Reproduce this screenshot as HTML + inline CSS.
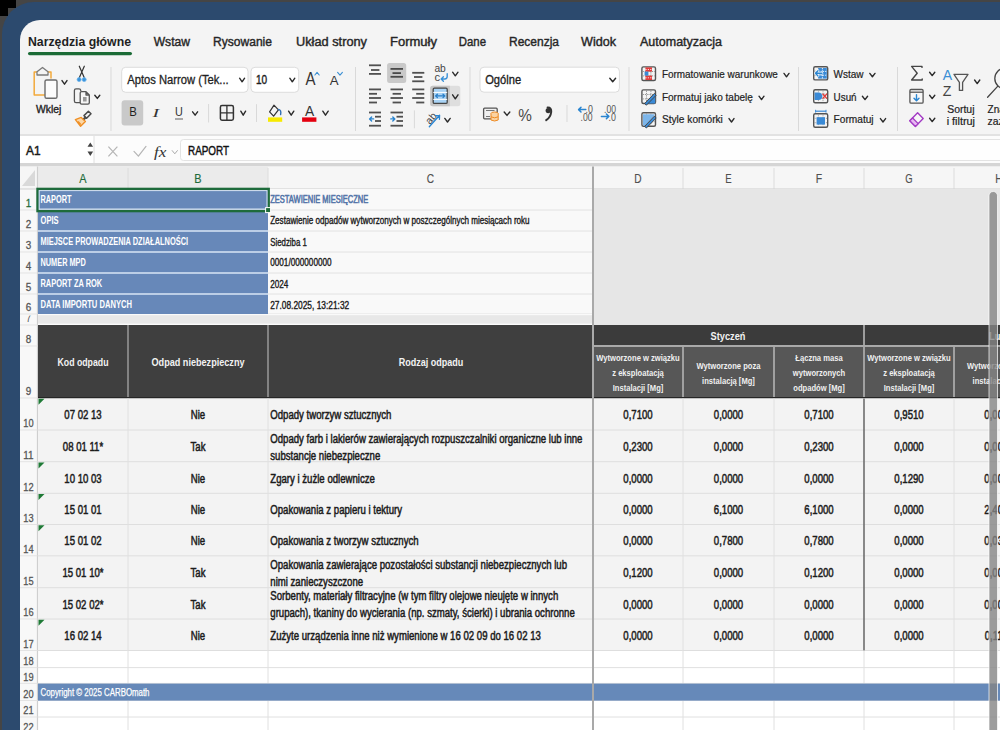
<!DOCTYPE html>
<html><head><meta charset="utf-8"><style>
html,body{margin:0;padding:0;width:1000px;height:730px;overflow:hidden;background:#454545}
svg{display:block;font-family:"Liberation Sans",sans-serif}
.m{stroke:#1c1c1c;stroke-width:0.5px}
.s{stroke-width:0.3px}
</style></head><body>
<svg width="1000" height="730" viewBox="0 0 1000 730">
<rect x="0" y="0" width="1000" height="730" fill="#454545"/>
<rect x="2" y="2" width="1200" height="900" rx="32" fill="#2c4a6e"/>
<path d="M0 0H16V8H8V16H0Z" fill="#000"/>
<rect x="20" y="20" width="1200" height="900" rx="20" fill="#f4f4f4"/>
<text x="28.00" y="46.00" font-size="12.5" font-weight="bold" fill="#1f1f1f" textLength="103.00" lengthAdjust="spacingAndGlyphs">Narzędzia główne</text>
<text x="153.70" y="46.00" font-size="12.5" font-weight="normal" fill="#262626" textLength="36.30" lengthAdjust="spacingAndGlyphs" stroke="#262626" stroke-width="0.4">Wstaw</text>
<text x="213.00" y="46.00" font-size="12.5" font-weight="normal" fill="#262626" textLength="59.00" lengthAdjust="spacingAndGlyphs" stroke="#262626" stroke-width="0.4">Rysowanie</text>
<text x="296.00" y="46.00" font-size="12.5" font-weight="normal" fill="#262626" textLength="71.00" lengthAdjust="spacingAndGlyphs" stroke="#262626" stroke-width="0.4">Układ strony</text>
<text x="390.00" y="46.00" font-size="12.5" font-weight="normal" fill="#262626" textLength="47.00" lengthAdjust="spacingAndGlyphs" stroke="#262626" stroke-width="0.4">Formuły</text>
<text x="458.80" y="46.00" font-size="12.5" font-weight="normal" fill="#262626" textLength="27.20" lengthAdjust="spacingAndGlyphs" stroke="#262626" stroke-width="0.4">Dane</text>
<text x="509.00" y="46.00" font-size="12.5" font-weight="normal" fill="#262626" textLength="50.00" lengthAdjust="spacingAndGlyphs" stroke="#262626" stroke-width="0.4">Recenzja</text>
<text x="581.00" y="46.00" font-size="12.5" font-weight="normal" fill="#262626" textLength="35.00" lengthAdjust="spacingAndGlyphs" stroke="#262626" stroke-width="0.4">Widok</text>
<text x="640.00" y="46.00" font-size="12.5" font-weight="normal" fill="#262626" textLength="82.00" lengthAdjust="spacingAndGlyphs" stroke="#262626" stroke-width="0.4">Automatyzacja</text>
<rect x="28" y="52" width="104" height="3.2" rx="1.6" fill="#1b6b36"/>
<line x1="111" y1="67" x2="111" y2="131" stroke="#d9d9d9" stroke-width="1"/>
<line x1="355.5" y1="67" x2="355.5" y2="131" stroke="#d9d9d9" stroke-width="1"/>
<line x1="470" y1="67" x2="470" y2="131" stroke="#d9d9d9" stroke-width="1"/>
<line x1="629" y1="67" x2="629" y2="131" stroke="#d9d9d9" stroke-width="1"/>
<line x1="798.5" y1="67" x2="798.5" y2="131" stroke="#d9d9d9" stroke-width="1"/>
<line x1="897.5" y1="67" x2="897.5" y2="131" stroke="#d9d9d9" stroke-width="1"/>
<rect x="20" y="134" width="1000" height="2" fill="#e2e2e2"/>
<rect x="20" y="136" width="1000" height="27" fill="#fcfcfc"/>
<rect x="20" y="136" width="74" height="27" fill="#ffffff"/>
<line x1="94" y1="136" x2="94" y2="163" stroke="#dedede" stroke-width="1"/>
<rect x="180.5" y="139.5" width="900" height="21" rx="3" fill="#fefefe" stroke="#e3e3e3" stroke-width="1"/>
<rect x="20" y="163" width="1000" height="3.5" fill="#d5d5d5"/>
<text x="26.00" y="155.00" font-size="12" font-weight="normal" fill="#1a1a1a" textLength="14.50" lengthAdjust="spacingAndGlyphs" stroke="#1a1a1a" stroke-width="0.45">A1</text>
<text x="188.00" y="155.20" font-size="13" font-weight="normal" fill="#111" textLength="41.00" lengthAdjust="spacingAndGlyphs" stroke="#111" stroke-width="0.45">RAPORT</text>
<rect x="20" y="166.5" width="1000" height="22.5" fill="#f6f6f6"/>
<rect x="38" y="166.5" width="230" height="22.5" fill="#ebebeb"/>
<rect x="20" y="189" width="17.5" height="560" fill="#f8f8f8"/>
<rect x="38" y="189" width="1000" height="560" fill="#ffffff"/>
<path d="M37.5 72 H34.2 V95 H44.5 M47.5 72 H51 V78" fill="none" stroke-linecap="round" stroke-linejoin="round" stroke="#f2a93b" stroke-width="1.5"/>
<path d="M37 75 V71.8 L42.5 67.5 L48 71.8 V75 Z" fill="#f4f4f4" stroke="#7a7a7a" stroke-width="1.3" stroke-linejoin="round"/>
<rect x="45" y="80" width="12" height="18.3" rx="1.6" fill="#fbfbfb" stroke="#6b6b6b" stroke-width="1.4"/>
<polyline points="62,80.6 64.5,84.2 67,80.6" fill="none" stroke="#2a2a2a" stroke-width="1.4" stroke-linecap="round" stroke-linejoin="round"/>
<text x="36.00" y="113.40" font-size="11" font-weight="normal" fill="#222" textLength="25.30" lengthAdjust="spacingAndGlyphs" stroke="#222" stroke-width="0.35">Wklej</text>
<path d="M79.3 66.2 L84.2 77.6 M84.3 66.2 L79.4 77.6" fill="none" stroke-linecap="round" stroke-linejoin="round" stroke="#333" stroke-width="1.2"/>
<circle cx="79.1" cy="79.6" r="2" fill="#3b94dc" stroke="#6bb3ea" stroke-width="0.8"/>
<circle cx="84.2" cy="79.6" r="2" fill="#3b94dc" stroke="#6bb3ea" stroke-width="0.8"/>
<path d="M80 102.6 H76 Q74.4 102.6 74.4 101 V90.4 Q74.4 88.8 76 88.8 H79 Q80.6 88.8 80.8 90.6" fill="none" stroke-linecap="round" stroke-linejoin="round" stroke="#555" stroke-width="1.3"/>
<path d="M81.6 91.6 H86 L89.3 95 V102.8 Q89.3 104.2 87.9 104.2 H81.6 Q80.2 104.2 80.2 102.8 V93 Q80.2 91.6 81.6 91.6 Z M86 91.6 V95 H89.3" fill="#f6f6f6" stroke="#555" stroke-width="1.3" stroke-linejoin="round"/>
<rect x="83" y="97" width="3.6" height="4.5" fill="#999"/>
<polyline points="94.8,95.2 97.3,98.4 99.8,95.2" fill="none" stroke="#2a2a2a" stroke-width="1.4" stroke-linecap="round" stroke-linejoin="round"/>
<path d="M88.4 111.2 L91 113.8 L86.6 118.2 L84 115.6 Z" fill="#f4f4f4" stroke="#4a4a4a" stroke-width="1.5" stroke-linejoin="round"/><path d="M85.6 117.4 L82.6 120.4" stroke="#4a4a4a" stroke-width="2.2"/>
<path d="M81.2 117.4 L85.4 121.6 L80.6 126.2 L75.4 119.6 Z" fill="#fbd7a8" stroke="#ef8f25" stroke-width="1.4" stroke-linejoin="round"/>
<path d="M78 121.5 L80.8 124.5" stroke="#ef8f25" stroke-width="1.4"/>
<rect x="121.7" y="67.3" width="126.3" height="25" rx="4" fill="#ffffff" stroke="#dcdcdc" stroke-width="1"/>
<text x="127.20" y="83.50" font-size="12" font-weight="normal" fill="#1f1f1f" textLength="101.50" lengthAdjust="spacingAndGlyphs" stroke="#1f1f1f" stroke-width="0.3">Aptos Narrow (Tek...</text>
<polyline points="239.6,78.2 242.1,81.8 244.6,78.2" fill="none" stroke="#2a2a2a" stroke-width="1.4" stroke-linecap="round" stroke-linejoin="round"/>
<rect x="251" y="67.3" width="47.7" height="25" rx="4" fill="#ffffff" stroke="#dcdcdc" stroke-width="1"/>
<text x="256.00" y="83.60" font-size="12" font-weight="normal" fill="#1f1f1f" textLength="11.20" lengthAdjust="spacingAndGlyphs" stroke="#1f1f1f" stroke-width="0.4">10</text>
<polyline points="289.8,78.2 292.3,81.8 294.8,78.2" fill="none" stroke="#2a2a2a" stroke-width="1.4" stroke-linecap="round" stroke-linejoin="round"/>
<text x="305.40" y="84.80" font-size="17.5" font-weight="normal" fill="#333" textLength="10.00" lengthAdjust="spacingAndGlyphs">A</text>
<polyline points="314.9,75 317.04999999999995,72.4 319.2,75" fill="none" stroke="#3b8fd3" stroke-width="1.1" stroke-linecap="round" stroke-linejoin="round"/>
<text x="329.80" y="84.80" font-size="13" font-weight="normal" fill="#333" textLength="8.80" lengthAdjust="spacingAndGlyphs">A</text>
<polyline points="337.6,72.4 340.0,75.2 342.4,72.4" fill="none" stroke="#3b8fd3" stroke-width="1.1" stroke-linecap="round" stroke-linejoin="round"/>
<rect x="121.6" y="100.2" width="21.6" height="25.2" rx="3" fill="#c9c9c9"/>
<text x="129.20" y="116.40" font-size="13.5" font-weight="normal" fill="#1f1f1f" textLength="7.60" lengthAdjust="spacingAndGlyphs">B</text>
<text x="152.4" y="116.8" font-size="13.5" font-family="Liberation Serif" font-style="italic" fill="#333" textLength="6.6" lengthAdjust="spacingAndGlyphs">I</text>
<text x="175.00" y="116.20" font-size="13" font-weight="normal" fill="#333" textLength="7.80" lengthAdjust="spacingAndGlyphs">U</text>
<rect x="175" y="118.4" width="8" height="1.2" fill="#777"/>
<polyline points="192.6,111.8 195.1,115.2 197.6,111.8" fill="none" stroke="#2a2a2a" stroke-width="1.4" stroke-linecap="round" stroke-linejoin="round"/>
<line x1="208.6" y1="104" x2="208.6" y2="122.5" stroke="#d9d9d9" stroke-width="1"/>
<rect x="220.4" y="105.6" width="13" height="14.6" rx="1.6" fill="none" stroke="#333" stroke-width="1.5"/>
<path d="M226.9 105.6 V120.2 M220.4 112.9 H233.4" stroke="#333" stroke-width="1.3"/>
<polyline points="240.8,111.2 243.2,115.2 245.6,111.2" fill="none" stroke="#2a2a2a" stroke-width="1.4" stroke-linecap="round" stroke-linejoin="round"/>
<line x1="256.5" y1="104.2" x2="256.5" y2="122" stroke="#d9d9d9" stroke-width="1"/>
<path d="M274 105.2 L278.4 109.8 L273.6 116.2 L269.6 111.8 Z" fill="none" stroke="#333" stroke-width="1.2" stroke-linejoin="round"/>
<path d="M278.5 109.5 Q281.6 110 280.6 114.6" fill="none" stroke="#2f6fb5" stroke-width="1.4" stroke-linecap="round"/>
<rect x="268" y="117.4" width="14.2" height="4.4" fill="#f7ea00"/>
<polyline points="288.6,111.2 291.20000000000005,115.2 293.8,111.2" fill="none" stroke="#2a2a2a" stroke-width="1.4" stroke-linecap="round" stroke-linejoin="round"/>
<text x="305.00" y="115.60" font-size="14" font-weight="normal" fill="#333" textLength="9.20" lengthAdjust="spacingAndGlyphs">A</text>
<rect x="302.1" y="117.4" width="14.3" height="4.4" fill="#e4000f"/>
<polyline points="322.8,111.2 325.5,115.2 328.2,111.2" fill="none" stroke="#2a2a2a" stroke-width="1.4" stroke-linecap="round" stroke-linejoin="round"/>
<line x1="369" y1="65.3" x2="381" y2="65.3" stroke="#505050" stroke-width="1.8"/>
<line x1="371" y1="70" x2="379.4" y2="70" stroke="#505050" stroke-width="1.8"/>
<line x1="369" y1="73.9" x2="381" y2="73.9" stroke="#505050" stroke-width="1.8"/>
<rect x="387.1" y="62.9" width="19.1" height="20.2" rx="2.5" fill="#c9c9c9"/>
<line x1="390.5" y1="68.9" x2="403" y2="68.9" stroke="#4a4a4a" stroke-width="1.8"/>
<line x1="392.5" y1="73.1" x2="401" y2="73.1" stroke="#4a4a4a" stroke-width="1.8"/>
<line x1="390.5" y1="76.8" x2="403" y2="76.8" stroke="#4a4a4a" stroke-width="1.8"/>
<line x1="412.2" y1="72.8" x2="424.3" y2="72.8" stroke="#505050" stroke-width="1.8"/>
<line x1="414" y1="77" x2="422.4" y2="77" stroke="#505050" stroke-width="1.8"/>
<line x1="412.2" y1="81.3" x2="424.3" y2="81.3" stroke="#505050" stroke-width="1.8"/>
<text x="434.40" y="72.40" font-size="10" font-weight="normal" fill="#444" textLength="11.40" lengthAdjust="spacingAndGlyphs">ab</text>
<text x="434.40" y="80.80" font-size="10" font-weight="normal" fill="#444" textLength="5.60" lengthAdjust="spacingAndGlyphs">c</text>
<path d="M447.2 73.8 V76.6 Q447.2 79 444.8 79 H441.4 M443.4 76.8 L441.2 79 L443.4 81.2" fill="none" stroke-linecap="round" stroke-linejoin="round" stroke="#3a92d8" stroke-width="1.4"/>
<polyline points="452.6,72.2 455.3,75.8 458,72.2" fill="none" stroke="#2a2a2a" stroke-width="1.4" stroke-linecap="round" stroke-linejoin="round"/>
<line x1="369" y1="89.4" x2="381" y2="89.4" stroke="#505050" stroke-width="1.8"/>
<line x1="369" y1="93.8" x2="377" y2="93.8" stroke="#505050" stroke-width="1.8"/>
<line x1="369" y1="98" x2="381" y2="98" stroke="#505050" stroke-width="1.8"/>
<line x1="369" y1="102.5" x2="377" y2="102.5" stroke="#505050" stroke-width="1.8"/>
<line x1="390.5" y1="89.4" x2="403" y2="89.4" stroke="#505050" stroke-width="1.8"/>
<line x1="392.6" y1="93.8" x2="401" y2="93.8" stroke="#505050" stroke-width="1.8"/>
<line x1="390.5" y1="98" x2="403" y2="98" stroke="#505050" stroke-width="1.8"/>
<line x1="392.6" y1="102.5" x2="401" y2="102.5" stroke="#505050" stroke-width="1.8"/>
<line x1="412.2" y1="89.4" x2="424.3" y2="89.4" stroke="#505050" stroke-width="1.8"/>
<line x1="416.2" y1="93.8" x2="424.3" y2="93.8" stroke="#505050" stroke-width="1.8"/>
<line x1="412.2" y1="98" x2="424.3" y2="98" stroke="#505050" stroke-width="1.8"/>
<line x1="416.2" y1="102.5" x2="424.3" y2="102.5" stroke="#505050" stroke-width="1.8"/>
<rect x="430.2" y="85.7" width="30.1" height="20.5" rx="2.5" fill="#dedede"/>
<path d="M432.7 85.7 H449.8 V106.2 H432.7 Q430.2 106.2 430.2 103.7 V88.2 Q430.2 85.7 432.7 85.7 Z" fill="#c6c6c6"/>
<rect x="433.2" y="88.2" width="14" height="15.2" rx="1.2" fill="#a9d3f5" stroke="#444" stroke-width="1.3"/>
<path d="M433.2 92.4 H447.2 M433.2 99.4 H447.2" stroke="#fff" stroke-width="1"/>
<path d="M435.6 95.9 H444.8 M437.4 94.2 L435.6 95.9 L437.4 97.6 M443 94.2 L444.8 95.9 L443 97.6" fill="none" stroke-linecap="round" stroke-linejoin="round" stroke="#2a7fc8" stroke-width="1.3"/>
<polyline points="452.6,94.8 455.3,98.8 458,94.8" fill="none" stroke="#2a2a2a" stroke-width="1.4" stroke-linecap="round" stroke-linejoin="round"/>
<line x1="369" y1="112.5" x2="381" y2="112.5" stroke="#505050" stroke-width="1.8"/>
<line x1="375" y1="116.7" x2="381" y2="116.7" stroke="#505050" stroke-width="1.8"/>
<line x1="375" y1="121" x2="381" y2="121" stroke="#505050" stroke-width="1.8"/>
<line x1="369" y1="125.7" x2="381" y2="125.7" stroke="#505050" stroke-width="1.8"/>
<line x1="390.5" y1="112.5" x2="403" y2="112.5" stroke="#505050" stroke-width="1.8"/>
<line x1="396.5" y1="116.7" x2="403" y2="116.7" stroke="#505050" stroke-width="1.8"/>
<line x1="396.5" y1="121" x2="403" y2="121" stroke="#505050" stroke-width="1.8"/>
<line x1="390.5" y1="125.7" x2="403" y2="125.7" stroke="#505050" stroke-width="1.8"/>
<path d="M373.6 118.9 H369.6 M371.6 116.9 L369.6 118.9 L371.6 120.9" fill="none" stroke-linecap="round" stroke-linejoin="round" stroke="#2a85d0" stroke-width="1.4"/>
<path d="M390.8 118.9 H394.8 M392.8 116.9 L394.8 118.9 L392.8 120.9" fill="none" stroke-linecap="round" stroke-linejoin="round" stroke="#2a85d0" stroke-width="1.4"/>
<line x1="414.4" y1="110.4" x2="414.4" y2="128.3" stroke="#d9d9d9" stroke-width="1"/>
<text x="0" y="0" font-size="10.5" fill="#444" transform="translate(430,125) rotate(-50)" textLength="11.5" lengthAdjust="spacingAndGlyphs">ab</text>
<path d="M429.3 126.7 L439.6 115.3 M435.4 115.6 L439.6 115.3 L439.4 119.4" fill="none" stroke-linecap="round" stroke-linejoin="round" stroke="#2a85d0" stroke-width="1.3"/>
<polyline points="444.8,118.4 447.5,122 450.2,118.4" fill="none" stroke="#2a2a2a" stroke-width="1.4" stroke-linecap="round" stroke-linejoin="round"/>
<rect x="480" y="67.2" width="139.4" height="25" rx="4" fill="#ffffff" stroke="#dcdcdc" stroke-width="1"/>
<text x="485.20" y="84.00" font-size="12.5" font-weight="normal" fill="#1f1f1f" textLength="36.00" lengthAdjust="spacingAndGlyphs" stroke="#1f1f1f" stroke-width="0.35">Ogólne</text>
<polyline points="609.8,78.2 612.7,81.8 615.6,78.2" fill="none" stroke="#2a2a2a" stroke-width="1.4" stroke-linecap="round" stroke-linejoin="round"/>
<rect x="483.6" y="108.2" width="13.6" height="10.6" rx="1" fill="#f0f0f0" stroke="#555" stroke-width="1.3"/>
<path d="M486 110.5 H494.5 M486 116.5 H490" stroke="#777" stroke-width="1"/>
<ellipse cx="494.6" cy="113.6" rx="3.6" ry="1.6" fill="#fbd3a2" stroke="#ee8a22" stroke-width="1"/>
<path d="M491 113.6 V120 Q494.6 122 498.2 120 V113.6 M491 116.8 Q494.6 118.8 498.2 116.8" fill="#fbd3a2" stroke="#ee8a22" stroke-width="1"/>
<polyline points="504.2,112 507.0,115.4 509.8,112" fill="none" stroke="#2a2a2a" stroke-width="1.4" stroke-linecap="round" stroke-linejoin="round"/>
<text x="518.20" y="120.60" font-size="17" font-weight="normal" fill="#4a4a4a" textLength="13.60" lengthAdjust="spacingAndGlyphs">%</text>
<path d="M547.6 107.6 Q551.6 107.4 551.2 112 Q550.6 117.4 546.2 120.2" fill="none" stroke="#333" stroke-width="2" stroke-linecap="round"/><circle cx="548.2" cy="110.6" r="2.6" fill="#333"/>
<line x1="567" y1="105" x2="567" y2="122" stroke="#d9d9d9" stroke-width="1"/>
<text x="585.60" y="112.60" font-size="10.5" font-weight="normal" fill="#555" textLength="7.40" lengthAdjust="spacingAndGlyphs">.0</text>
<text x="580.60" y="120.80" font-size="10.5" font-weight="normal" fill="#555" textLength="12.00" lengthAdjust="spacingAndGlyphs">.00</text>
<path d="M585.8 109.6 H578.6 M581 107.2 L578.6 109.6 L581 112" fill="none" stroke-linecap="round" stroke-linejoin="round" stroke="#2a85d0" stroke-width="1.5"/>
<text x="604.00" y="112.60" font-size="10.5" font-weight="normal" fill="#555" textLength="12.00" lengthAdjust="spacingAndGlyphs">.00</text>
<text x="608.60" y="120.80" font-size="10.5" font-weight="normal" fill="#555" textLength="7.40" lengthAdjust="spacingAndGlyphs">.0</text>
<path d="M601.4 116.4 H608.8 M606.4 114 L608.8 116.4 L606.4 118.8" fill="none" stroke-linecap="round" stroke-linejoin="round" stroke="#2a85d0" stroke-width="1.5"/>
<rect x="641.9000000000001" y="66.9" width="13.6" height="13.6" rx="1.5" fill="#f4f4f4" stroke="#555" stroke-width="1.4"/>
<path d="M646.5 67.60000000000001 V79.8 M650.9 67.60000000000001 V79.8 M642.6 71.5 H654.8000000000001 M642.6 75.9 H654.8000000000001" stroke="#8a8a8a" stroke-width="0.9" stroke-dasharray="1.3 1"/>
<rect x="645.4" y="67.4" width="6.6" height="4.2" fill="#e23b3b"/>
<rect x="645.4" y="75.6" width="6.6" height="4.4" fill="#e23b3b"/>
<rect x="644.6" y="71.6" width="3.8" height="4" fill="#3a8ad6"/>
<path d="M645.4 69.5 H652 M645.4 77.8 H652" stroke="#fff" stroke-width="0.8" stroke-dasharray="1.2 1.2"/>
<text x="661.90" y="77.90" font-size="11" font-weight="normal" fill="#222" textLength="116.00" lengthAdjust="spacingAndGlyphs" stroke="#222" stroke-width="0.2">Formatowanie warunkowe</text>
<polyline points="784,73.4 786.5,76.8 789,73.4" fill="none" stroke="#2a2a2a" stroke-width="1.4" stroke-linecap="round" stroke-linejoin="round"/>
<rect x="641.9000000000001" y="89.9" width="13.6" height="13.6" rx="1.5" fill="#f4f4f4" stroke="#555" stroke-width="1.4"/>
<path d="M646.5 90.60000000000001 V102.8 M650.9 90.60000000000001 V102.8 M642.6 94.5 H654.8000000000001 M642.6 98.9 H654.8000000000001" stroke="#8a8a8a" stroke-width="0.9" stroke-dasharray="1.3 1"/>
<path d="M647.6 103.6 L655.2 96 V103.6 Z" fill="#3a8ad6"/>
<path d="M644.6 103.6 L654.4 93.4 L656.2 95.2 L646.4 105.2 Z" fill="#3a8ad6" stroke="#3d3d3d" stroke-width="0.9" stroke-linejoin="round"/>
<text x="661.90" y="100.80" font-size="11" font-weight="normal" fill="#222" textLength="91.00" lengthAdjust="spacingAndGlyphs" stroke="#222" stroke-width="0.2">Formatuj jako tabelę</text>
<polyline points="759,96.2 761.5,99.6 764,96.2" fill="none" stroke="#2a2a2a" stroke-width="1.4" stroke-linecap="round" stroke-linejoin="round"/>
<rect x="641.9000000000001" y="112.7" width="13.6" height="13.6" rx="1.5" fill="#f4f4f4" stroke="#555" stroke-width="1.4"/>
<path d="M646.5 113.4 V125.6 M650.9 113.4 V125.6 M642.6 117.3 H654.8000000000001 M642.6 121.7 H654.8000000000001" stroke="#8a8a8a" stroke-width="0.9" stroke-dasharray="1.3 1"/>
<path d="M643 114.2 H654.4 V116 L645.6 125.4 H643 Z" fill="#7db6ea"/>
<path d="M644.6 126.4 L654.4 116.2 L656.2 118 L646.4 128 Z" fill="#3a8ad6" stroke="#3d3d3d" stroke-width="0.9" stroke-linejoin="round"/>
<text x="661.90" y="123.20" font-size="11" font-weight="normal" fill="#222" textLength="61.00" lengthAdjust="spacingAndGlyphs" stroke="#222" stroke-width="0.2">Style komórki</text>
<polyline points="729,118.6 731.5,122 734,118.6" fill="none" stroke="#2a2a2a" stroke-width="1.4" stroke-linecap="round" stroke-linejoin="round"/>
<rect x="813.7" y="66.7" width="14.0" height="13.2" rx="1.5" fill="#f4f4f4" stroke="#555" stroke-width="1.4"/>
<path d="M818.4 67.4 V79.19999999999999 M823.0 67.4 V79.19999999999999 M814.4 71.2 H827.0 M814.4 75.4 H827.0" stroke="#9a9a9a" stroke-width="0.9" stroke-dasharray="1.3 1"/>
<rect x="818.2" y="68" width="8.6" height="10.6" fill="#3a8ad6"/>
<path d="M818.2 71.4 H826.8 M818.2 75.2 H826.8 M822.4 68 V78.6" stroke="#fff" stroke-width="0.9" stroke-dasharray="1.3 1"/>
<path d="M822 73.3 H815.4 M818 70.7 L815.4 73.3 L818 75.9" fill="none" stroke-linecap="round" stroke-linejoin="round" stroke="#ffffff" stroke-width="2.6"/>
<path d="M822 73.3 H815.4 M818 70.7 L815.4 73.3 L818 75.9" fill="none" stroke-linecap="round" stroke-linejoin="round" stroke="#2a85d0" stroke-width="1.4"/>
<text x="833.60" y="77.90" font-size="11" font-weight="normal" fill="#222" textLength="30.00" lengthAdjust="spacingAndGlyphs" stroke="#222" stroke-width="0.2">Wstaw</text>
<polyline points="869.8,73.4 872.4,76.8 875,73.4" fill="none" stroke="#2a2a2a" stroke-width="1.4" stroke-linecap="round" stroke-linejoin="round"/>
<rect x="813.7" y="89.7" width="14.0" height="13.0" rx="1.5" fill="#f4f4f4" stroke="#555" stroke-width="1.4"/>
<path d="M818.4 90.4 V102.0 M823.0 90.4 V102.0 M814.4 94.1 H827.0 M814.4 98.3 H827.0" stroke="#9a9a9a" stroke-width="0.9" stroke-dasharray="1.3 1"/>
<path d="M814.6 92.4 H818.4 Q822.2 92.4 822.2 96.2 Q822.2 100 818.4 100 H814.6 Z" fill="#3a8ad6"/>
<path d="M822.6 93.8 L827 98.6 M827 93.8 L822.6 98.6" stroke="#e23b3b" stroke-width="1.3"/>
<text x="833.60" y="100.80" font-size="11" font-weight="normal" fill="#222" textLength="23.00" lengthAdjust="spacingAndGlyphs" stroke="#222" stroke-width="0.2">Usuń</text>
<polyline points="862.4,96.2 865.0,99.6 867.6,96.2" fill="none" stroke="#2a2a2a" stroke-width="1.4" stroke-linecap="round" stroke-linejoin="round"/>
<rect x="813.7" y="113.7" width="14.0" height="13.6" rx="1.5" fill="#f4f4f4" stroke="#555" stroke-width="1.4"/>
<path d="M818.4 114.4 V126.6 M823.0 114.4 V126.6 M814.4 118.3 H827.0 M814.4 122.7 H827.0" stroke="#9a9a9a" stroke-width="0.9" stroke-dasharray="1.3 1"/>
<rect x="816.6" y="117.2" width="8.4" height="7.4" fill="#3a8ad6"/>
<path d="M815.6 111.2 H826" stroke="#3a8ad6" stroke-width="1.2"/><path d="M815.6 109.8 V112.6 M826 109.8 V112.6" stroke="#3a8ad6" stroke-width="1"/>
<text x="833.60" y="123.20" font-size="11" font-weight="normal" fill="#222" textLength="40.00" lengthAdjust="spacingAndGlyphs" stroke="#222" stroke-width="0.2">Formatuj</text>
<polyline points="880.4,118.6 883.0,122 885.6,118.6" fill="none" stroke="#2a2a2a" stroke-width="1.4" stroke-linecap="round" stroke-linejoin="round"/>
<path d="M922 67.4 V66.4 H911.6 L917.2 73.2 L911.6 80 H922.2 V79" fill="none" stroke-linecap="round" stroke-linejoin="round" stroke="#444" stroke-width="1.4"/>
<polyline points="929.6,72.2 932.2,75.6 934.8,72.2" fill="none" stroke="#2a2a2a" stroke-width="1.4" stroke-linecap="round" stroke-linejoin="round"/>
<rect x="909.9" y="89.5" width="13.2" height="13.6" rx="1.2" fill="#f8f8f8" stroke="#555" stroke-width="1.3"/>
<path d="M909.9 92.2 H923.1" stroke="#555" stroke-width="1.3"/>
<path d="M916.5 94.6 V100.6 M914 98.2 L916.5 100.8 L919 98.2" fill="none" stroke-linecap="round" stroke-linejoin="round" stroke="#2a85d0" stroke-width="1.4"/>
<polyline points="929.6,95.2 932.2,98.6 934.8,95.2" fill="none" stroke="#2a2a2a" stroke-width="1.4" stroke-linecap="round" stroke-linejoin="round"/>
<path d="M917.6 112.8 L923.2 118.4 L915.4 126.4 L909.8 120.8 Z" fill="#f7f7f7" stroke="#a33bc4" stroke-width="1.4" stroke-linejoin="round"/>
<path d="M909.8 120.8 L912.6 118 L918.2 123.6 L915.4 126.4 Z" fill="#e7b9f2" stroke="#a33bc4" stroke-width="1.3" stroke-linejoin="round"/>
<polyline points="929.6,118.2 932.2,121.6 934.8,118.2" fill="none" stroke="#2a2a2a" stroke-width="1.4" stroke-linecap="round" stroke-linejoin="round"/>
<text x="942.80" y="80.20" font-size="14.5" font-weight="normal" fill="#3a8fd6" textLength="9.40" lengthAdjust="spacingAndGlyphs">A</text>
<text x="942.80" y="95.60" font-size="14.5" font-weight="normal" fill="#444" textLength="8.60" lengthAdjust="spacingAndGlyphs">Z</text>
<path d="M954 74.4 H968 L962.6 82.4 V90.4 H959.4 V82.4 Z" fill="#f4f4f4" stroke="#555" stroke-width="1.3" stroke-linejoin="round"/>
<polyline points="974.6,80 977.2,83.6 979.8,80" fill="none" stroke="#2a2a2a" stroke-width="1.4" stroke-linecap="round" stroke-linejoin="round"/>
<text x="947.20" y="113.30" font-size="11" font-weight="normal" fill="#222" textLength="27.30" lengthAdjust="spacingAndGlyphs" stroke="#222" stroke-width="0.2">Sortuj</text>
<text x="946.70" y="125.30" font-size="11" font-weight="normal" fill="#222" textLength="28.30" lengthAdjust="spacingAndGlyphs" stroke="#222" stroke-width="0.2">i filtruj</text>
<circle cx="1005" cy="78.5" r="10.2" fill="none" stroke="#444" stroke-width="1.3"/>
<path d="M987.6 97.2 L997.6 86.4" stroke="#444" stroke-width="1.3" stroke-linecap="round"/>
<text x="987.60" y="113.30" font-size="11" font-weight="normal" fill="#222" textLength="30.00" lengthAdjust="spacingAndGlyphs" stroke="#222" stroke-width="0.2">Znajdź</text>
<text x="987.60" y="125.30" font-size="11" font-weight="normal" fill="#222" textLength="38.00" lengthAdjust="spacingAndGlyphs" stroke="#222" stroke-width="0.2">zaznacz</text>
<path d="M87.5 146.8 L90.3 142.4 L93.1 146.8 Z M87.5 151.6 L90.3 156 L93.1 151.6 Z" fill="#444"/>
<path d="M108.4 146.6 L117.4 156.4 M117.4 146.6 L108.4 156.4" stroke="#b5b5b5" stroke-width="1.2"/>
<path d="M134 151.4 L138.4 156.2 L146 146.4" fill="none" stroke-linecap="round" stroke-linejoin="round" stroke="#b5b5b5" stroke-width="1.2"/>
<text x="154" y="156.6" font-size="15" font-family="Liberation Serif" font-style="italic" fill="#333" textLength="12.4" lengthAdjust="spacingAndGlyphs">fx</text>
<polyline points="172.2,150.6 174.8,153.8 177.4,150.6" fill="none" stroke="#aaa" stroke-width="1" stroke-linecap="round" stroke-linejoin="round"/>
<text x="79.35" y="182.50" font-size="12" font-weight="normal" fill="#1e6b3b" textLength="7.30" lengthAdjust="spacingAndGlyphs" stroke="#1e6b3b" stroke-width="0.15">A</text>
<text x="194.35" y="182.50" font-size="12" font-weight="normal" fill="#1e6b3b" textLength="7.30" lengthAdjust="spacingAndGlyphs" stroke="#1e6b3b" stroke-width="0.15">B</text>
<text x="426.85" y="182.50" font-size="12" font-weight="normal" fill="#505050" textLength="7.30" lengthAdjust="spacingAndGlyphs" stroke="#505050" stroke-width="0.15">C</text>
<text x="634.35" y="182.50" font-size="12" font-weight="normal" fill="#505050" textLength="7.30" lengthAdjust="spacingAndGlyphs" stroke="#505050" stroke-width="0.15">D</text>
<text x="725.30" y="182.50" font-size="12" font-weight="normal" fill="#505050" textLength="6.40" lengthAdjust="spacingAndGlyphs" stroke="#505050" stroke-width="0.15">E</text>
<text x="815.80" y="182.50" font-size="12" font-weight="normal" fill="#505050" textLength="6.40" lengthAdjust="spacingAndGlyphs" stroke="#505050" stroke-width="0.15">F</text>
<text x="905.35" y="182.50" font-size="12" font-weight="normal" fill="#505050" textLength="7.30" lengthAdjust="spacingAndGlyphs" stroke="#505050" stroke-width="0.15">G</text>
<text x="995.35" y="182.50" font-size="12" font-weight="normal" fill="#505050" textLength="7.30" lengthAdjust="spacingAndGlyphs" stroke="#505050" stroke-width="0.15">H</text>
<line x1="128" y1="168" x2="128" y2="189" stroke="#dcdcdc" stroke-width="1"/>
<line x1="268" y1="168" x2="268" y2="189" stroke="#dcdcdc" stroke-width="1"/>
<line x1="593" y1="168" x2="593" y2="189" stroke="#dcdcdc" stroke-width="1"/>
<line x1="683" y1="168" x2="683" y2="189" stroke="#dcdcdc" stroke-width="1"/>
<line x1="774" y1="168" x2="774" y2="189" stroke="#dcdcdc" stroke-width="1"/>
<line x1="864" y1="168" x2="864" y2="189" stroke="#dcdcdc" stroke-width="1"/>
<line x1="954" y1="168" x2="954" y2="189" stroke="#dcdcdc" stroke-width="1"/>
<line x1="1044" y1="168" x2="1044" y2="189" stroke="#dcdcdc" stroke-width="1"/>
<line x1="37.5" y1="166.5" x2="37.5" y2="1000" stroke="#cfcfcf" stroke-width="1.2"/>
<line x1="20" y1="189" x2="1000" y2="189" stroke="#cfcfcf" stroke-width="1"/>
<path d="M35 170 L35 186 L22 186 Z" fill="#d9d9d9"/>
<rect x="268" y="189" width="325" height="125" fill="#f9f9f9"/>
<line x1="268" y1="210" x2="593" y2="210" stroke="#e2e2e2" stroke-width="1"/>
<line x1="268" y1="231" x2="593" y2="231" stroke="#e2e2e2" stroke-width="1"/>
<line x1="268" y1="252" x2="593" y2="252" stroke="#e2e2e2" stroke-width="1"/>
<line x1="268" y1="273" x2="593" y2="273" stroke="#e2e2e2" stroke-width="1"/>
<line x1="268" y1="294" x2="593" y2="294" stroke="#e2e2e2" stroke-width="1"/>
<line x1="268" y1="314" x2="593" y2="314" stroke="#e2e2e2" stroke-width="1"/>
<rect x="38" y="189" width="230" height="125" fill="#6788b9"/>
<rect x="38" y="209.1" width="230" height="1.8" fill="#c6d6ec"/>
<rect x="38" y="230.1" width="230" height="1.8" fill="#c6d6ec"/>
<rect x="38" y="251.1" width="230" height="1.8" fill="#c6d6ec"/>
<rect x="38" y="272.1" width="230" height="1.8" fill="#c6d6ec"/>
<rect x="38" y="293.1" width="230" height="1.8" fill="#c6d6ec"/>
<rect x="594" y="189" width="500" height="136" fill="#e6e6e6"/>
<rect x="38" y="314" width="555" height="11" fill="#e8e8e8"/>
<rect x="38" y="314" width="555" height="1.2" fill="#fafafa"/>
<rect x="38" y="323.6" width="555" height="1.4" fill="#fbfbfb"/>
<rect x="38" y="325" width="555" height="73" fill="#3f3f3f"/>
<rect x="594" y="325" width="500" height="20.5" fill="#3b3b3b"/>
<rect x="594" y="346.5" width="500" height="51.5" fill="#575757"/>
<rect x="594" y="345" width="500" height="1.8" fill="#a9a9a9"/>
<rect x="127.3" y="325" width="1.4" height="73" fill="#a0a0a0"/>
<rect x="267.3" y="325" width="1.4" height="73" fill="#a0a0a0"/>
<rect x="682.1" y="346" width="1.8" height="52" fill="#a9a9a9"/>
<rect x="773.1" y="346" width="1.8" height="52" fill="#a9a9a9"/>
<rect x="953.1" y="346" width="1.8" height="52" fill="#a9a9a9"/>
<rect x="863.1" y="325" width="1.8" height="73" fill="#a9a9a9"/>
<rect x="38" y="397" width="1000" height="1.5" fill="#262626"/>
<rect x="38" y="398.5" width="1000" height="252" fill="#f3f3f3"/>
<line x1="38" y1="430" x2="1000" y2="430" stroke="#dedede" stroke-width="1"/>
<line x1="38" y1="461.7" x2="1000" y2="461.7" stroke="#dedede" stroke-width="1"/>
<line x1="38" y1="493.3" x2="1000" y2="493.3" stroke="#dedede" stroke-width="1"/>
<line x1="38" y1="524.5" x2="1000" y2="524.5" stroke="#dedede" stroke-width="1"/>
<line x1="38" y1="555.8" x2="1000" y2="555.8" stroke="#dedede" stroke-width="1"/>
<line x1="38" y1="587.7" x2="1000" y2="587.7" stroke="#dedede" stroke-width="1"/>
<line x1="38" y1="619" x2="1000" y2="619" stroke="#dedede" stroke-width="1"/>
<line x1="38" y1="650.5" x2="1000" y2="650.5" stroke="#dedede" stroke-width="1"/>
<line x1="128" y1="398.5" x2="128" y2="650.5" stroke="#e0e0e0" stroke-width="1"/>
<line x1="268" y1="398.5" x2="268" y2="650.5" stroke="#e0e0e0" stroke-width="1"/>
<line x1="683" y1="398.5" x2="683" y2="650.5" stroke="#e0e0e0" stroke-width="1"/>
<line x1="774" y1="398.5" x2="774" y2="650.5" stroke="#e0e0e0" stroke-width="1"/>
<line x1="954" y1="398.5" x2="954" y2="650.5" stroke="#e0e0e0" stroke-width="1"/>
<rect x="863.2" y="398.5" width="1.6" height="252" fill="#6e6e6e"/>
<line x1="38" y1="667.6" x2="1000" y2="667.6" stroke="#e0e0e0" stroke-width="1"/>
<line x1="38" y1="683.4" x2="1000" y2="683.4" stroke="#e0e0e0" stroke-width="1"/>
<line x1="38" y1="700.5" x2="1000" y2="700.5" stroke="#e0e0e0" stroke-width="1"/>
<line x1="38" y1="717" x2="1000" y2="717" stroke="#e0e0e0" stroke-width="1"/>
<line x1="128" y1="650.5" x2="128" y2="733" stroke="#e0e0e0" stroke-width="1"/>
<line x1="268" y1="650.5" x2="268" y2="733" stroke="#e0e0e0" stroke-width="1"/>
<line x1="683" y1="650.5" x2="683" y2="733" stroke="#e0e0e0" stroke-width="1"/>
<line x1="774" y1="650.5" x2="774" y2="733" stroke="#e0e0e0" stroke-width="1"/>
<line x1="864" y1="650.5" x2="864" y2="733" stroke="#e0e0e0" stroke-width="1"/>
<line x1="954" y1="650.5" x2="954" y2="733" stroke="#e0e0e0" stroke-width="1"/>
<rect x="38" y="683.6" width="1000" height="17" fill="#6689b9"/>
<rect x="592" y="166.5" width="2" height="570" fill="#a9a9a9"/>
<text x="25.75" y="207.20" font-size="11.5" font-weight="normal" fill="#1e6b3b" textLength="5.50" lengthAdjust="spacingAndGlyphs" stroke="#1e6b3b" stroke-width="0.3">1</text>
<line x1="20" y1="210" x2="37.5" y2="210" stroke="#e3e3e3" stroke-width="1"/>
<text x="25.75" y="228.20" font-size="11.5" font-weight="normal" fill="#555" textLength="5.50" lengthAdjust="spacingAndGlyphs" stroke="#555" stroke-width="0.3">2</text>
<line x1="20" y1="231" x2="37.5" y2="231" stroke="#e3e3e3" stroke-width="1"/>
<text x="25.75" y="249.20" font-size="11.5" font-weight="normal" fill="#555" textLength="5.50" lengthAdjust="spacingAndGlyphs" stroke="#555" stroke-width="0.3">3</text>
<line x1="20" y1="252" x2="37.5" y2="252" stroke="#e3e3e3" stroke-width="1"/>
<text x="25.75" y="270.20" font-size="11.5" font-weight="normal" fill="#555" textLength="5.50" lengthAdjust="spacingAndGlyphs" stroke="#555" stroke-width="0.3">4</text>
<line x1="20" y1="273" x2="37.5" y2="273" stroke="#e3e3e3" stroke-width="1"/>
<text x="25.75" y="291.20" font-size="11.5" font-weight="normal" fill="#555" textLength="5.50" lengthAdjust="spacingAndGlyphs" stroke="#555" stroke-width="0.3">5</text>
<line x1="20" y1="294" x2="37.5" y2="294" stroke="#e3e3e3" stroke-width="1"/>
<text x="25.75" y="311.20" font-size="11.5" font-weight="normal" fill="#555" textLength="5.50" lengthAdjust="spacingAndGlyphs" stroke="#555" stroke-width="0.3">6</text>
<line x1="20" y1="314" x2="37.5" y2="314" stroke="#e3e3e3" stroke-width="1"/>
<clipPath id="c7"><rect x="20" y="315.4" width="17" height="9"/></clipPath>
<text x="25.90" y="322.20" font-size="11.5" font-weight="normal" fill="#555" textLength="5.20" lengthAdjust="spacingAndGlyphs" clip-path="url(#c7)">7</text>
<line x1="20" y1="325" x2="37.5" y2="325" stroke="#e3e3e3" stroke-width="1"/>
<text x="25.75" y="343.20" font-size="11.5" font-weight="normal" fill="#555" textLength="5.50" lengthAdjust="spacingAndGlyphs" stroke="#555" stroke-width="0.3">8</text>
<line x1="20" y1="346" x2="37.5" y2="346" stroke="#e3e3e3" stroke-width="1"/>
<text x="25.75" y="395.20" font-size="11.5" font-weight="normal" fill="#555" textLength="5.50" lengthAdjust="spacingAndGlyphs" stroke="#555" stroke-width="0.3">9</text>
<line x1="20" y1="398" x2="37.5" y2="398" stroke="#e3e3e3" stroke-width="1"/>
<text x="23.35" y="427.20" font-size="11.5" font-weight="normal" fill="#555" textLength="10.30" lengthAdjust="spacingAndGlyphs" stroke="#555" stroke-width="0.3">10</text>
<line x1="20" y1="430" x2="37.5" y2="430" stroke="#e3e3e3" stroke-width="1"/>
<text x="23.35" y="458.90" font-size="11.5" font-weight="normal" fill="#555" textLength="10.30" lengthAdjust="spacingAndGlyphs" stroke="#555" stroke-width="0.3">11</text>
<line x1="20" y1="461.7" x2="37.5" y2="461.7" stroke="#e3e3e3" stroke-width="1"/>
<text x="23.35" y="490.50" font-size="11.5" font-weight="normal" fill="#555" textLength="10.30" lengthAdjust="spacingAndGlyphs" stroke="#555" stroke-width="0.3">12</text>
<line x1="20" y1="493.3" x2="37.5" y2="493.3" stroke="#e3e3e3" stroke-width="1"/>
<text x="23.35" y="521.70" font-size="11.5" font-weight="normal" fill="#555" textLength="10.30" lengthAdjust="spacingAndGlyphs" stroke="#555" stroke-width="0.3">13</text>
<line x1="20" y1="524.5" x2="37.5" y2="524.5" stroke="#e3e3e3" stroke-width="1"/>
<text x="23.35" y="553.00" font-size="11.5" font-weight="normal" fill="#555" textLength="10.30" lengthAdjust="spacingAndGlyphs" stroke="#555" stroke-width="0.3">14</text>
<line x1="20" y1="555.8" x2="37.5" y2="555.8" stroke="#e3e3e3" stroke-width="1"/>
<text x="23.35" y="584.90" font-size="11.5" font-weight="normal" fill="#555" textLength="10.30" lengthAdjust="spacingAndGlyphs" stroke="#555" stroke-width="0.3">15</text>
<line x1="20" y1="587.7" x2="37.5" y2="587.7" stroke="#e3e3e3" stroke-width="1"/>
<text x="23.35" y="616.20" font-size="11.5" font-weight="normal" fill="#555" textLength="10.30" lengthAdjust="spacingAndGlyphs" stroke="#555" stroke-width="0.3">16</text>
<line x1="20" y1="619" x2="37.5" y2="619" stroke="#e3e3e3" stroke-width="1"/>
<text x="23.35" y="647.70" font-size="11.5" font-weight="normal" fill="#555" textLength="10.30" lengthAdjust="spacingAndGlyphs" stroke="#555" stroke-width="0.3">17</text>
<line x1="20" y1="650.5" x2="37.5" y2="650.5" stroke="#e3e3e3" stroke-width="1"/>
<text x="23.35" y="664.80" font-size="11.5" font-weight="normal" fill="#555" textLength="10.30" lengthAdjust="spacingAndGlyphs" stroke="#555" stroke-width="0.3">18</text>
<line x1="20" y1="667.6" x2="37.5" y2="667.6" stroke="#e3e3e3" stroke-width="1"/>
<text x="23.35" y="680.60" font-size="11.5" font-weight="normal" fill="#555" textLength="10.30" lengthAdjust="spacingAndGlyphs" stroke="#555" stroke-width="0.3">19</text>
<line x1="20" y1="683.4" x2="37.5" y2="683.4" stroke="#e3e3e3" stroke-width="1"/>
<text x="23.35" y="697.70" font-size="11.5" font-weight="normal" fill="#555" textLength="10.30" lengthAdjust="spacingAndGlyphs" stroke="#555" stroke-width="0.3">20</text>
<line x1="20" y1="700.5" x2="37.5" y2="700.5" stroke="#e3e3e3" stroke-width="1"/>
<text x="23.35" y="714.20" font-size="11.5" font-weight="normal" fill="#555" textLength="10.30" lengthAdjust="spacingAndGlyphs" stroke="#555" stroke-width="0.3">21</text>
<line x1="20" y1="717" x2="37.5" y2="717" stroke="#e3e3e3" stroke-width="1"/>
<text x="23.35" y="730.70" font-size="11.5" font-weight="normal" fill="#555" textLength="10.30" lengthAdjust="spacingAndGlyphs" stroke="#555" stroke-width="0.3">22</text>
<line x1="20" y1="733.5" x2="37.5" y2="733.5" stroke="#e3e3e3" stroke-width="1"/>
<text x="40.50" y="202.70" font-size="10" font-weight="bold" fill="#ffffff" textLength="31.00" lengthAdjust="spacingAndGlyphs">RAPORT</text>
<text x="40.50" y="223.70" font-size="10" font-weight="bold" fill="#ffffff" textLength="18.10" lengthAdjust="spacingAndGlyphs">OPIS</text>
<text x="40.50" y="244.80" font-size="10" font-weight="bold" fill="#ffffff" textLength="147.60" lengthAdjust="spacingAndGlyphs">MIEJSCE PROWADZENIA DZIAŁALNOŚCI</text>
<text x="40.50" y="265.50" font-size="10" font-weight="bold" fill="#ffffff" textLength="45.30" lengthAdjust="spacingAndGlyphs">NUMER MPD</text>
<text x="40.50" y="287.00" font-size="10" font-weight="bold" fill="#ffffff" textLength="61.70" lengthAdjust="spacingAndGlyphs">RAPORT ZA ROK</text>
<text x="40.50" y="307.90" font-size="10" font-weight="bold" fill="#ffffff" textLength="91.50" lengthAdjust="spacingAndGlyphs">DATA IMPORTU DANYCH</text>
<text x="270.20" y="203.40" font-size="10" font-weight="normal" fill="#5274a8" textLength="98.00" lengthAdjust="spacingAndGlyphs" stroke="#5274a8" stroke-width="0.55">ZESTAWIENIE MIESIĘCZNE</text>
<text x="270.20" y="224.40" font-size="10" font-weight="normal" fill="#1a1a1a" textLength="259.40" lengthAdjust="spacingAndGlyphs" stroke="#1a1a1a" stroke-width="0.35">Zestawienie odpadów wytworzonych w poszczególnych miesiącach roku</text>
<text x="270.20" y="245.50" font-size="10" font-weight="normal" fill="#1a1a1a" textLength="36.60" lengthAdjust="spacingAndGlyphs" stroke="#1a1a1a" stroke-width="0.35">Siedziba 1</text>
<text x="270.20" y="266.20" font-size="10" font-weight="normal" fill="#1a1a1a" textLength="61.40" lengthAdjust="spacingAndGlyphs" stroke="#1a1a1a" stroke-width="0.35">0001/000000000</text>
<text x="270.20" y="287.70" font-size="10" font-weight="normal" fill="#1a1a1a" textLength="18.20" lengthAdjust="spacingAndGlyphs" stroke="#1a1a1a" stroke-width="0.35">2024</text>
<text x="270.20" y="308.60" font-size="10" font-weight="normal" fill="#1a1a1a" textLength="79.00" lengthAdjust="spacingAndGlyphs" stroke="#1a1a1a" stroke-width="0.35">27.08.2025, 13:21:32</text>
<text x="57.50" y="366.40" font-size="11.5" font-weight="bold" fill="#f2f2f2" textLength="51.00" lengthAdjust="spacingAndGlyphs">Kod odpadu</text>
<text x="151.50" y="366.40" font-size="11.5" font-weight="bold" fill="#f2f2f2" textLength="93.00" lengthAdjust="spacingAndGlyphs">Odpad niebezpieczny</text>
<text x="398.65" y="366.40" font-size="11.5" font-weight="bold" fill="#f2f2f2" textLength="64.70" lengthAdjust="spacingAndGlyphs">Rodzaj odpadu</text>
<text x="710.60" y="340.00" font-size="11" font-weight="bold" fill="#f2f2f2" textLength="34.80" lengthAdjust="spacingAndGlyphs">Styczeń</text>
<text x="989.00" y="340.00" font-size="11" font-weight="bold" fill="#f2f2f2" textLength="20.00" lengthAdjust="spacingAndGlyphs">Luty</text>
<text x="596.26" y="361.00" font-size="9.5" font-weight="bold" fill="#f0f0f0" textLength="83.47" lengthAdjust="spacingAndGlyphs">Wytworzone w związku</text>
<text x="612.23" y="376.20" font-size="9.5" font-weight="bold" fill="#f0f0f0" textLength="51.54" lengthAdjust="spacingAndGlyphs">z eksploatacją</text>
<text x="612.66" y="391.40" font-size="9.5" font-weight="bold" fill="#f0f0f0" textLength="50.67" lengthAdjust="spacingAndGlyphs">Instalacji [Mg]</text>
<text x="696.48" y="368.50" font-size="9.5" font-weight="bold" fill="#f0f0f0" textLength="64.04" lengthAdjust="spacingAndGlyphs">Wytworzone poza</text>
<text x="702.11" y="383.70" font-size="9.5" font-weight="bold" fill="#f0f0f0" textLength="52.79" lengthAdjust="spacingAndGlyphs">instalacją [Mg]</text>
<text x="795.34" y="361.00" font-size="9.5" font-weight="bold" fill="#f0f0f0" textLength="47.32" lengthAdjust="spacingAndGlyphs">Łączna masa</text>
<text x="792.82" y="376.20" font-size="9.5" font-weight="bold" fill="#f0f0f0" textLength="52.36" lengthAdjust="spacingAndGlyphs">wytworzonych</text>
<text x="793.25" y="391.40" font-size="9.5" font-weight="bold" fill="#f0f0f0" textLength="51.50" lengthAdjust="spacingAndGlyphs">odpadów [Mg]</text>
<text x="867.26" y="361.00" font-size="9.5" font-weight="bold" fill="#f0f0f0" textLength="83.47" lengthAdjust="spacingAndGlyphs">Wytworzone w związku</text>
<text x="883.23" y="376.20" font-size="9.5" font-weight="bold" fill="#f0f0f0" textLength="51.54" lengthAdjust="spacingAndGlyphs">z eksploatacją</text>
<text x="883.66" y="391.40" font-size="9.5" font-weight="bold" fill="#f0f0f0" textLength="50.67" lengthAdjust="spacingAndGlyphs">Instalacji [Mg]</text>
<text x="966.98" y="368.50" font-size="9.5" font-weight="bold" fill="#f0f0f0" textLength="64.04" lengthAdjust="spacingAndGlyphs">Wytworzone poza</text>
<text x="972.61" y="383.70" font-size="9.5" font-weight="bold" fill="#f0f0f0" textLength="52.79" lengthAdjust="spacingAndGlyphs">instalacją [Mg]</text>
<text x="64.32" y="419.30" font-size="12" font-weight="normal" fill="#1c1c1c" textLength="37.37" lengthAdjust="spacingAndGlyphs" class="m">07 02 13</text>
<text x="190.80" y="419.30" font-size="12" font-weight="normal" fill="#1c1c1c" textLength="14.41" lengthAdjust="spacingAndGlyphs" class="m">Nie</text>
<text x="270.30" y="419.30" font-size="12" font-weight="normal" fill="#1c1c1c" textLength="121.11" lengthAdjust="spacingAndGlyphs" class="m">Odpady tworzyw sztucznych</text>
<text x="623.32" y="419.30" font-size="12" font-weight="normal" fill="#1c1c1c" textLength="29.36" lengthAdjust="spacingAndGlyphs" class="m">0,7100</text>
<text x="713.82" y="419.30" font-size="12" font-weight="normal" fill="#1c1c1c" textLength="29.36" lengthAdjust="spacingAndGlyphs" class="m">0,0000</text>
<text x="804.32" y="419.30" font-size="12" font-weight="normal" fill="#1c1c1c" textLength="29.36" lengthAdjust="spacingAndGlyphs" class="m">0,7100</text>
<text x="894.32" y="419.30" font-size="12" font-weight="normal" fill="#1c1c1c" textLength="29.36" lengthAdjust="spacingAndGlyphs" class="m">0,9510</text>
<text x="984.32" y="419.30" font-size="12" font-weight="normal" fill="#1c1c1c" textLength="29.36" lengthAdjust="spacingAndGlyphs" class="m">0,0000</text>
<path d="M38.5 398.8 H44.5 L38.5 404.8 Z" fill="#1f7a36"/>
<text x="62.80" y="451.15" font-size="12" font-weight="normal" fill="#1c1c1c" textLength="40.39" lengthAdjust="spacingAndGlyphs" class="m">08 01 11*</text>
<text x="190.53" y="451.15" font-size="12" font-weight="normal" fill="#1c1c1c" textLength="14.94" lengthAdjust="spacingAndGlyphs" class="m">Tak</text>
<text x="270.30" y="442.95" font-size="12" font-weight="normal" fill="#1c1c1c" textLength="312.16" lengthAdjust="spacingAndGlyphs" class="m">Odpady farb i lakierów zawierających rozpuszczalniki organiczne lub inne</text>
<text x="270.30" y="459.65" font-size="12" font-weight="normal" fill="#1c1c1c" textLength="109.94" lengthAdjust="spacingAndGlyphs" class="m">substancje niebezpieczne</text>
<text x="623.32" y="451.15" font-size="12" font-weight="normal" fill="#1c1c1c" textLength="29.36" lengthAdjust="spacingAndGlyphs" class="m">0,2300</text>
<text x="713.82" y="451.15" font-size="12" font-weight="normal" fill="#1c1c1c" textLength="29.36" lengthAdjust="spacingAndGlyphs" class="m">0,0000</text>
<text x="804.32" y="451.15" font-size="12" font-weight="normal" fill="#1c1c1c" textLength="29.36" lengthAdjust="spacingAndGlyphs" class="m">0,2300</text>
<text x="894.32" y="451.15" font-size="12" font-weight="normal" fill="#1c1c1c" textLength="29.36" lengthAdjust="spacingAndGlyphs" class="m">0,0000</text>
<text x="984.32" y="451.15" font-size="12" font-weight="normal" fill="#1c1c1c" textLength="29.36" lengthAdjust="spacingAndGlyphs" class="m">0,0000</text>
<text x="64.32" y="482.80" font-size="12" font-weight="normal" fill="#1c1c1c" textLength="37.37" lengthAdjust="spacingAndGlyphs" class="m">10 10 03</text>
<text x="190.80" y="482.80" font-size="12" font-weight="normal" fill="#1c1c1c" textLength="14.41" lengthAdjust="spacingAndGlyphs" class="m">Nie</text>
<text x="270.30" y="482.80" font-size="12" font-weight="normal" fill="#1c1c1c" textLength="104.58" lengthAdjust="spacingAndGlyphs" class="m">Zgary i żużle odlewnicze</text>
<text x="623.32" y="482.80" font-size="12" font-weight="normal" fill="#1c1c1c" textLength="29.36" lengthAdjust="spacingAndGlyphs" class="m">0,0000</text>
<text x="713.82" y="482.80" font-size="12" font-weight="normal" fill="#1c1c1c" textLength="29.36" lengthAdjust="spacingAndGlyphs" class="m">0,0000</text>
<text x="804.32" y="482.80" font-size="12" font-weight="normal" fill="#1c1c1c" textLength="29.36" lengthAdjust="spacingAndGlyphs" class="m">0,0000</text>
<text x="894.32" y="482.80" font-size="12" font-weight="normal" fill="#1c1c1c" textLength="29.36" lengthAdjust="spacingAndGlyphs" class="m">0,1290</text>
<text x="984.32" y="482.80" font-size="12" font-weight="normal" fill="#1c1c1c" textLength="29.36" lengthAdjust="spacingAndGlyphs" class="m">0,0000</text>
<path d="M38.5 462.5 H44.5 L38.5 468.5 Z" fill="#1f7a36"/>
<text x="64.32" y="514.20" font-size="12" font-weight="normal" fill="#1c1c1c" textLength="37.37" lengthAdjust="spacingAndGlyphs" class="m">15 01 01</text>
<text x="190.80" y="514.20" font-size="12" font-weight="normal" fill="#1c1c1c" textLength="14.41" lengthAdjust="spacingAndGlyphs" class="m">Nie</text>
<text x="270.30" y="514.20" font-size="12" font-weight="normal" fill="#1c1c1c" textLength="131.81" lengthAdjust="spacingAndGlyphs" class="m">Opakowania z papieru i tektury</text>
<text x="623.32" y="514.20" font-size="12" font-weight="normal" fill="#1c1c1c" textLength="29.36" lengthAdjust="spacingAndGlyphs" class="m">0,0000</text>
<text x="713.82" y="514.20" font-size="12" font-weight="normal" fill="#1c1c1c" textLength="29.36" lengthAdjust="spacingAndGlyphs" class="m">6,1000</text>
<text x="804.32" y="514.20" font-size="12" font-weight="normal" fill="#1c1c1c" textLength="29.36" lengthAdjust="spacingAndGlyphs" class="m">6,1000</text>
<text x="894.32" y="514.20" font-size="12" font-weight="normal" fill="#1c1c1c" textLength="29.36" lengthAdjust="spacingAndGlyphs" class="m">0,0000</text>
<text x="984.32" y="514.20" font-size="12" font-weight="normal" fill="#1c1c1c" textLength="29.36" lengthAdjust="spacingAndGlyphs" class="m">2,4000</text>
<path d="M38.5 494.1 H44.5 L38.5 500.1 Z" fill="#1f7a36"/>
<text x="64.32" y="545.45" font-size="12" font-weight="normal" fill="#1c1c1c" textLength="37.37" lengthAdjust="spacingAndGlyphs" class="m">15 01 02</text>
<text x="190.80" y="545.45" font-size="12" font-weight="normal" fill="#1c1c1c" textLength="14.41" lengthAdjust="spacingAndGlyphs" class="m">Nie</text>
<text x="270.30" y="545.45" font-size="12" font-weight="normal" fill="#1c1c1c" textLength="148.32" lengthAdjust="spacingAndGlyphs" class="m">Opakowania z tworzyw sztucznych</text>
<text x="623.32" y="545.45" font-size="12" font-weight="normal" fill="#1c1c1c" textLength="29.36" lengthAdjust="spacingAndGlyphs" class="m">0,0000</text>
<text x="713.82" y="545.45" font-size="12" font-weight="normal" fill="#1c1c1c" textLength="29.36" lengthAdjust="spacingAndGlyphs" class="m">0,7800</text>
<text x="804.32" y="545.45" font-size="12" font-weight="normal" fill="#1c1c1c" textLength="29.36" lengthAdjust="spacingAndGlyphs" class="m">0,7800</text>
<text x="894.32" y="545.45" font-size="12" font-weight="normal" fill="#1c1c1c" textLength="29.36" lengthAdjust="spacingAndGlyphs" class="m">0,0000</text>
<text x="984.32" y="545.45" font-size="12" font-weight="normal" fill="#1c1c1c" textLength="29.36" lengthAdjust="spacingAndGlyphs" class="m">0,0300</text>
<path d="M38.5 525.3 H44.5 L38.5 531.3 Z" fill="#1f7a36"/>
<text x="62.45" y="577.05" font-size="12" font-weight="normal" fill="#1c1c1c" textLength="41.11" lengthAdjust="spacingAndGlyphs" class="m">15 01 10*</text>
<text x="190.53" y="577.05" font-size="12" font-weight="normal" fill="#1c1c1c" textLength="14.94" lengthAdjust="spacingAndGlyphs" class="m">Tak</text>
<text x="270.30" y="568.85" font-size="12" font-weight="normal" fill="#1c1c1c" textLength="296.71" lengthAdjust="spacingAndGlyphs" class="m">Opakowania zawierające pozostałości substancji niebezpiecznych lub</text>
<text x="270.30" y="585.55" font-size="12" font-weight="normal" fill="#1c1c1c" textLength="92.84" lengthAdjust="spacingAndGlyphs" class="m">nimi zanieczyszczone</text>
<text x="623.32" y="577.05" font-size="12" font-weight="normal" fill="#1c1c1c" textLength="29.36" lengthAdjust="spacingAndGlyphs" class="m">0,1200</text>
<text x="713.82" y="577.05" font-size="12" font-weight="normal" fill="#1c1c1c" textLength="29.36" lengthAdjust="spacingAndGlyphs" class="m">0,0000</text>
<text x="804.32" y="577.05" font-size="12" font-weight="normal" fill="#1c1c1c" textLength="29.36" lengthAdjust="spacingAndGlyphs" class="m">0,1200</text>
<text x="894.32" y="577.05" font-size="12" font-weight="normal" fill="#1c1c1c" textLength="29.36" lengthAdjust="spacingAndGlyphs" class="m">0,0000</text>
<text x="984.32" y="577.05" font-size="12" font-weight="normal" fill="#1c1c1c" textLength="29.36" lengthAdjust="spacingAndGlyphs" class="m">0,0000</text>
<text x="62.45" y="608.65" font-size="12" font-weight="normal" fill="#1c1c1c" textLength="41.11" lengthAdjust="spacingAndGlyphs" class="m">15 02 02*</text>
<text x="190.53" y="608.65" font-size="12" font-weight="normal" fill="#1c1c1c" textLength="14.94" lengthAdjust="spacingAndGlyphs" class="m">Tak</text>
<text x="270.30" y="600.45" font-size="12" font-weight="normal" fill="#1c1c1c" textLength="287.94" lengthAdjust="spacingAndGlyphs" class="m">Sorbenty, materiały filtracyjne (w tym filtry olejowe nieujęte w innych</text>
<text x="270.30" y="617.15" font-size="12" font-weight="normal" fill="#1c1c1c" textLength="304.50" lengthAdjust="spacingAndGlyphs" class="m">grupach), tkaniny do wycierania (np. szmaty, ścierki) i ubrania ochronne</text>
<text x="623.32" y="608.65" font-size="12" font-weight="normal" fill="#1c1c1c" textLength="29.36" lengthAdjust="spacingAndGlyphs" class="m">0,0000</text>
<text x="713.82" y="608.65" font-size="12" font-weight="normal" fill="#1c1c1c" textLength="29.36" lengthAdjust="spacingAndGlyphs" class="m">0,0000</text>
<text x="804.32" y="608.65" font-size="12" font-weight="normal" fill="#1c1c1c" textLength="29.36" lengthAdjust="spacingAndGlyphs" class="m">0,0000</text>
<text x="894.32" y="608.65" font-size="12" font-weight="normal" fill="#1c1c1c" textLength="29.36" lengthAdjust="spacingAndGlyphs" class="m">0,0000</text>
<text x="984.32" y="608.65" font-size="12" font-weight="normal" fill="#1c1c1c" textLength="29.36" lengthAdjust="spacingAndGlyphs" class="m">0,0000</text>
<text x="64.32" y="640.05" font-size="12" font-weight="normal" fill="#1c1c1c" textLength="37.37" lengthAdjust="spacingAndGlyphs" class="m">16 02 14</text>
<text x="190.80" y="640.05" font-size="12" font-weight="normal" fill="#1c1c1c" textLength="14.41" lengthAdjust="spacingAndGlyphs" class="m">Nie</text>
<text x="270.30" y="640.05" font-size="12" font-weight="normal" fill="#1c1c1c" textLength="270.58" lengthAdjust="spacingAndGlyphs" class="m">Zużyte urządzenia inne niż wymienione w 16 02 09 do 16 02 13</text>
<text x="623.32" y="640.05" font-size="12" font-weight="normal" fill="#1c1c1c" textLength="29.36" lengthAdjust="spacingAndGlyphs" class="m">0,0000</text>
<text x="713.82" y="640.05" font-size="12" font-weight="normal" fill="#1c1c1c" textLength="29.36" lengthAdjust="spacingAndGlyphs" class="m">0,0000</text>
<text x="804.32" y="640.05" font-size="12" font-weight="normal" fill="#1c1c1c" textLength="29.36" lengthAdjust="spacingAndGlyphs" class="m">0,0000</text>
<text x="894.32" y="640.05" font-size="12" font-weight="normal" fill="#1c1c1c" textLength="29.36" lengthAdjust="spacingAndGlyphs" class="m">0,0000</text>
<text x="984.67" y="640.05" font-size="12" font-weight="normal" fill="#1c1c1c" textLength="28.65" lengthAdjust="spacingAndGlyphs" class="m">0,1100</text>
<path d="M38.5 619.8 H44.5 L38.5 625.8 Z" fill="#1f7a36"/>
<text x="40.50" y="695.50" font-size="10" font-weight="normal" fill="#ffffff" textLength="109.00" lengthAdjust="spacingAndGlyphs" stroke="#fff" stroke-width="0.25">Copyright © 2025 CARBOmath</text>
<rect x="37.5" y="188.9" width="231.2" height="22.2" fill="none" stroke="#1e6b3b" stroke-width="2.4"/>
<rect x="39.2" y="190.6" width="227.8" height="18.4" fill="none" stroke="#d7e3f1" stroke-width="1"/>
<rect x="265.6" y="207.6" width="5" height="5" fill="#1e6b3b" stroke="#fff" stroke-width="1"/>
<rect x="989" y="191.5" width="8.5" height="600" rx="4.25" fill="#858585" fill-opacity="0.8" stroke="#ffffff" stroke-opacity="0.7" stroke-width="1"/>
</svg></body></html>
